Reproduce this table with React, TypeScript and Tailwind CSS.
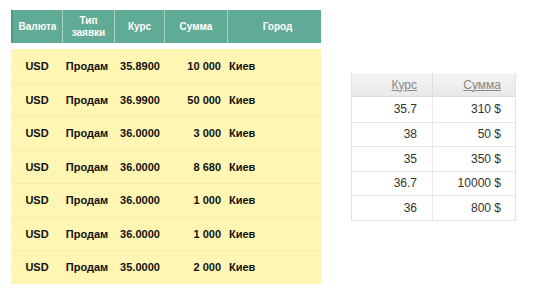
const orders = [
  { cur: "USD", type: "Продам", rate: "35.8900", sum: "10 000", city: "Киев" },
  { cur: "USD", type: "Продам", rate: "36.9900", sum: "50 000", city: "Киев" },
  { cur: "USD", type: "Продам", rate: "36.0000", sum: "3 000", city: "Киев" },
  { cur: "USD", type: "Продам", rate: "36.0000", sum: "8 680", city: "Киев" },
  { cur: "USD", type: "Продам", rate: "36.0000", sum: "1 000", city: "Киев" },
  { cur: "USD", type: "Продам", rate: "36.0000", sum: "1 000", city: "Киев" },
  { cur: "USD", type: "Продам", rate: "35.0000", sum: "2 000", city: "Киев" },
];

const deals = [
  { rate: "35.7", sum: "310 $" },
  { rate: "38", sum: "50 $" },
  { rate: "35", sum: "350 $" },
  { rate: "36.7", sum: "10000 $" },
  { rate: "36", sum: "800 $" },
];

const cols = "grid grid-cols-[50px_52px_50px_63px_95px]";

export default function App() {
  return (
    <div className="w-[550px] h-[296px] bg-white flex font-['Liberation_Sans',Arial,sans-serif]">
      {/* Left: orders */}
      <div className="ml-[11px] mt-[10px] w-[310px] flex flex-col">
        <div className={`${cols} h-[33px] bg-[#5fab96] border-l-2 border-[#4e9a85] text-white text-[10px] font-bold leading-[12px]`}>
          <div className="flex items-center justify-center border-r border-[#a9d3c6]">Валюта</div>
          <div className="flex items-center justify-center text-center border-r border-[#a9d3c6]">
            Тип
            <br />
            заявки
          </div>
          <div className="flex items-center justify-center border-r border-[#a9d3c6]">Курс</div>
          <div className="flex items-center justify-center border-r border-[#a9d3c6]">Сумма</div>
          <div className="flex items-center justify-center pl-1">Город</div>
        </div>

        <div className="mt-[6px] bg-[#fff6b3] flex flex-col">
          {orders.map((o, i) => (
            <div
              key={i}
              className={`${cols} h-[33.5px] items-center text-[11px] font-bold text-[#111] ${i > 0 ? "border-t border-[#f6ecaa]" : ""}`}
            >
              <div className="text-center pl-[2px]">{o.cur}</div>
              <div className="text-center">{o.type}</div>
              <div className="text-center pl-[4px]">{o.rate}</div>
              <div className="text-right pr-[5px]">{o.sum}</div>
              <div className="pl-[3px]">{o.city}</div>
            </div>
          ))}
        </div>
      </div>

      {/* Right: deals */}
      <div className="ml-[30px] mt-[73px] w-[165px] self-start border border-[#e2e2e2] border-t-0 text-[12px] text-[#333]">
        <div className="grid grid-cols-[81px_84px] h-[24px] bg-gradient-to-b from-[#f6f6f6] to-[#e8e8e8] border-b border-[#dcdcdc]">
          <div className="flex items-center justify-end pr-[15px] border-r border-[#dedede] text-[#888] underline">Курс</div>
          <div className="flex items-center justify-end pr-[16px] text-[#888] underline">Сумма</div>
        </div>
        {deals.map((d, i) => (
          <div
            key={i}
            className={`grid grid-cols-[81px_84px] h-[24.5px] ${i > 0 ? "border-t border-[#e6e6e6]" : ""}`}
          >
            <div className="flex items-center justify-end pr-[15px] border-r border-[#ececec]">{d.rate}</div>
            <div className="flex items-center justify-end pr-[16px]">{d.sum}</div>
          </div>
        ))}
      </div>
    </div>
  );
}
